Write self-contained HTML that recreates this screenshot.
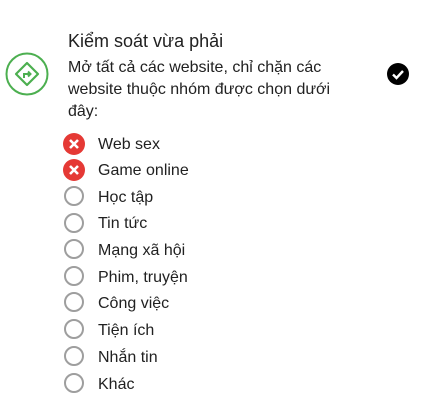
<html><head><style>
body{margin:0;width:422px;height:418px;background:#fff;font-family:"Liberation Sans",sans-serif;color:#212121;position:relative;overflow:hidden}
.t{position:absolute;left:68px;top:31px;font-size:18px}
.d{position:absolute;left:68px;top:57px;font-size:16px;line-height:22px;width:280px}
.it{position:absolute;left:98px;font-size:16px;line-height:20px}
.c{position:absolute;left:64px;width:16px;height:16px;border:2px solid #9e9e9e;border-radius:50%}
.x{position:absolute;left:63px;width:22px;height:22px;border-radius:50%;background:#e53935}
</style></head><body>
<svg style="position:absolute;left:5px;top:52px" width="44" height="44" viewBox="0 0 44 44">
<circle cx="22" cy="22" r="20.5" fill="none" stroke="#4caf50" stroke-width="2"/>
<path d="M22 11 L33 22 L22 33 L11 22 Z" fill="none" stroke="#4caf50" stroke-width="2.2" stroke-linejoin="round"/>
<path d="M19 26 V22 H25 M23 19.5 L25.5 22 L23 24.5" fill="none" stroke="#4caf50" stroke-width="2"/>
</svg>
<div class="t">Kiểm soát vừa phải</div>
<div class="d">Mở tất cả các website, chỉ chặn các website thuộc nhóm được chọn dưới đây:</div>
<svg style="position:absolute;left:387px;top:63px" width="22" height="22" viewBox="0 0 22 22"><circle cx="11" cy="11" r="11" fill="#000"/><path d="M6 11.5 L9.5 15 L16 8" fill="none" stroke="#fff" stroke-width="2.4"/></svg>
<svg class="x" style="top:133px" viewBox="0 0 22 22"><path d="M7 7L15 15M15 7L7 15" stroke="#fff" stroke-width="2.6"/></svg>
<div class="it" style="top:135px">Web sex</div>
<svg class="x" style="top:159px" viewBox="0 0 22 22"><path d="M7 7L15 15M15 7L7 15" stroke="#fff" stroke-width="2.6"/></svg>
<div class="it" style="top:161px">Game online</div>
<div class="c" style="top:186px"></div><div class="it" style="top:188px">Học tập</div>
<div class="c" style="top:213px"></div><div class="it" style="top:214px">Tin tức</div>
<div class="c" style="top:239px"></div><div class="it" style="top:241px">Mạng xã hội</div>
<div class="c" style="top:266px"></div><div class="it" style="top:268px">Phim, truyện</div>
<div class="c" style="top:292px"></div><div class="it" style="top:294px">Công việc</div>
<div class="c" style="top:319px"></div><div class="it" style="top:321px">Tiện ích</div>
<div class="c" style="top:346px"></div><div class="it" style="top:348px">Nhắn tin</div>
<div class="c" style="top:373px"></div><div class="it" style="top:375px">Khác</div>
</body></html>
